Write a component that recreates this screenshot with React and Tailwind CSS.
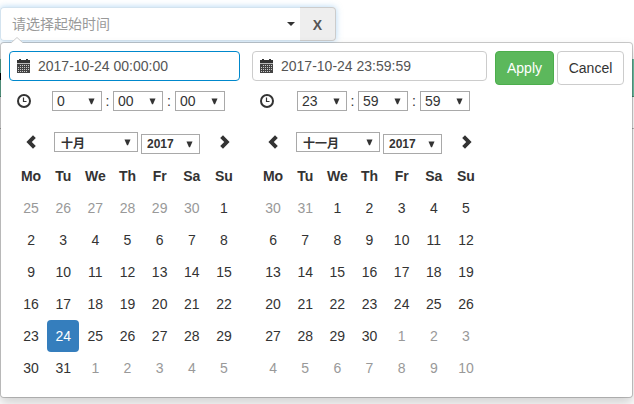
import React from "react";

const WEEKDAYS = ["Mo", "Tu", "We", "Th", "Fr", "Sa", "Su"];

const range = (from, to) => Array.from({ length: to - from + 1 }, (_, i) => from + i);
const muted = (days) => days.map((day) => ({ day, off: true }));
const normal = (days) => days.map((day) => ({ day, off: false }));

const OCTOBER = [...muted(range(25, 30)), ...normal(range(1, 31)), ...muted(range(1, 5))];
const NOVEMBER = [...muted([30, 31]), ...normal(range(1, 30)), ...muted(range(1, 10))];

function CalendarIcon() {
  return (
    <svg width="13" height="14" viewBox="0 0 13 14" fill="#333" shapeRendering="crispEdges">
      <path d="M2 0h2v1h5V0h2v1h2v3H0V1h2z" />
      <path d="M0 4h13v1H0z" fill="#bbb" />
      <path d="M0 5h13v9H0z" fill="#444" />
      <path
        d="M3 6h1v1H3zM5 6h1v1H5zM7 6h1v1H7zM9 6h1v1H9zM11 6h1v1h-1zM1 8h1v1H1zM3 8h1v1H3zM5 8h1v1H5zM7 8h1v1H7zM9 8h1v1H9zM11 8h1v1h-1zM1 10h1v1H1zM3 10h1v1H3zM5 10h1v1H5zM7 10h1v1H7zM9 10h1v1H9zM11 10h1v1h-1zM1 12h1v1H1zM3 12h1v1H3zM5 12h1v1H5zM7 12h1v1H7zM9 12h1v1H9z"
        fill="#ccc"
      />
    </svg>
  );
}

function ClockIcon() {
  return (
    <svg width="14" height="14" viewBox="0 0 14 14" fill="none" stroke="#333">
      <circle cx="7" cy="7" r="6" strokeWidth="2" />
      <path d="M6.5 3.5V7.5H9.5" strokeWidth="1.2" />
    </svg>
  );
}

function Chevron({ flip }) {
  return (
    <svg width="10" height="14" viewBox="0 0 10 14" fill="#333" className={flip ? "-scale-x-100" : ""}>
      <path d="M7 0.3L9.8 3L5.8 7L9.8 11L7 13.7L0.4 7z" />
    </svg>
  );
}

function Arrow() {
  return (
    <svg width="7" height="7" viewBox="0 0 7 7" fill="#333">
      <path d="M0.5 0.5h6L4 6.3H3z" />
    </svg>
  );
}

function DateField({ value, active, className }) {
  return (
    <div
      className={`flex h-[30px] items-center rounded border pl-[7px] text-[#555] ${
        active ? "border-[#08c]" : "border-[#ccc]"
      } ${className}`}
    >
      <CalendarIcon />
      <span className="ml-[8px]">{value}</span>
    </div>
  );
}

function TimeSelect({ value }) {
  return (
    <div className="flex h-5 w-[50px] items-center justify-between border border-[#a9a9a9] pr-[6px] pl-1">
      <span>{value}</span>
      <Arrow />
    </div>
  );
}

function TimeRow({ parts, gap }) {
  return (
    <div className="mt-[10px] flex h-5 items-center pl-2">
      <ClockIcon />
      <div className={`flex items-center ${gap}`}>
        <TimeSelect value={parts[0]} />
        <span className="w-[11px] text-center">:</span>
        <TimeSelect value={parts[1]} />
        <span className="w-[12px] text-center">:</span>
        <TimeSelect value={parts[2]} />
      </div>
    </div>
  );
}

function Month({ name, days, selected, offset, gridClass }) {
  return (
    <div className={`mt-[17px] w-[226px] ${offset}`}>
      <div className="flex h-8 items-start">
        <div className="mt-[7px] ml-[12px] w-[10px]">
          <Chevron />
        </div>
        <div className="mt-[4px] ml-[18px] flex h-5 w-[84px] items-center justify-between border border-[#a9a9a9] pr-[6px] pl-[6px] text-[12px] font-bold">
          <span className="pt-px font-['Noto_Sans_CJK_SC',sans-serif]">{name}</span>
          <Arrow />
        </div>
        <div className="mt-[6px] ml-[3px] flex h-5 w-[59px] items-center justify-between border border-[#a9a9a9] pr-[6px] pl-[5px] text-[12px] font-bold">
          <span>2017</span>
          <Arrow />
        </div>
        <div className="mt-[7px] ml-[20px] w-[10px]">
          <Chevron flip />
        </div>
      </div>
      <div className={`grid grid-cols-7 text-center leading-8 ${gridClass}`}>
        {WEEKDAYS.map((day) => (
          <div key={day} className="h-8 font-bold">
            {day}
          </div>
        ))}
        {days.map(({ day, off }, i) => (
          <div
            key={i}
            className={`h-8 ${
              !off && day === selected ? "rounded bg-[#357ebd] text-white" : off ? "text-[#999]" : "text-[#333]"
            }`}
          >
            {day}
          </div>
        ))}
      </div>
    </div>
  );
}

export default function App() {
  return (
    <div className="relative h-[404px] w-[634px] overflow-hidden bg-white font-['Liberation_Sans','Noto_Sans_CJK_SC',sans-serif] text-[14px] leading-5 text-[#333]">
      <div className="absolute top-[59px] left-0 h-[38px] w-full border-b border-[#4a8f78] bg-[#6cc0a4]" />
      <div className="absolute top-[128px] left-0 h-px w-full bg-[#bbb]" />
      <div className="absolute top-[73px] left-0 h-[7px] w-px bg-black" />

      <div className="pt-[7px]">
        <div className="flex h-[34px] w-[336px] rounded shadow-[0_0_6px_rgba(102,175,233,0.5)]">
          <div className="flex flex-1 items-center justify-between rounded-l border border-r-0 border-[#d3e3ef] bg-white pr-[5px] pl-[11px] text-[#999]">
            <span>请选择起始时间</span>
            <span className="border-x-4 border-t-4 border-x-transparent border-t-[#333]" />
          </div>
          <div className="flex w-[36px] items-center justify-center rounded-r border border-l-0 border-[#ccc] bg-[#eee] pt-[2px] text-[14px] font-bold text-[#555]">
            X
          </div>
        </div>
      </div>

      <div className="relative mt-px h-[356px] w-[633px] rounded border border-black/20 bg-white bg-clip-padding pt-2 pl-2 shadow-[0_6px_12px_rgba(0,0,0,0.175)]">
        <svg className="absolute -top-[6px] left-[9px]" width="14" height="7" viewBox="0 0 14 7">
          <path d="M1 6L7 0.5L13 6V7H1z" fill="#fff" />
          <path d="M1 6L7 0.5L13 6" fill="none" stroke="#ccc" />
        </svg>
        <div className="flex">
          <div className="w-[243px]">
            <DateField value="2017-10-24 00:00:00" active className="w-[231px]" />
            <TimeRow parts={["0", "00", "00"]} gap="ml-[21px]" />
            <Month name="十月" days={OCTOBER} selected={24} offset="ml-[5px]" gridClass="ml-[1px]" />
          </div>
          <div className="w-[243px]">
            <DateField value="2017-10-24 23:59:59" className="w-[235px]" />
            <TimeRow parts={["23", "59", "59"]} gap="ml-[23px]" />
            <Month name="十一月" days={NOVEMBER} offset="ml-[4px]" gridClass="ml-[1px]" />
          </div>
          <div className="flex gap-[3px]">
            <button className="h-[34px] w-[59px] rounded border border-[#4cae4c] bg-[#5cb85c] text-white">Apply</button>
            <button className="h-[34px] w-[67px] rounded border border-[#ccc] bg-white">Cancel</button>
          </div>
        </div>
      </div>
    </div>
  );
}
